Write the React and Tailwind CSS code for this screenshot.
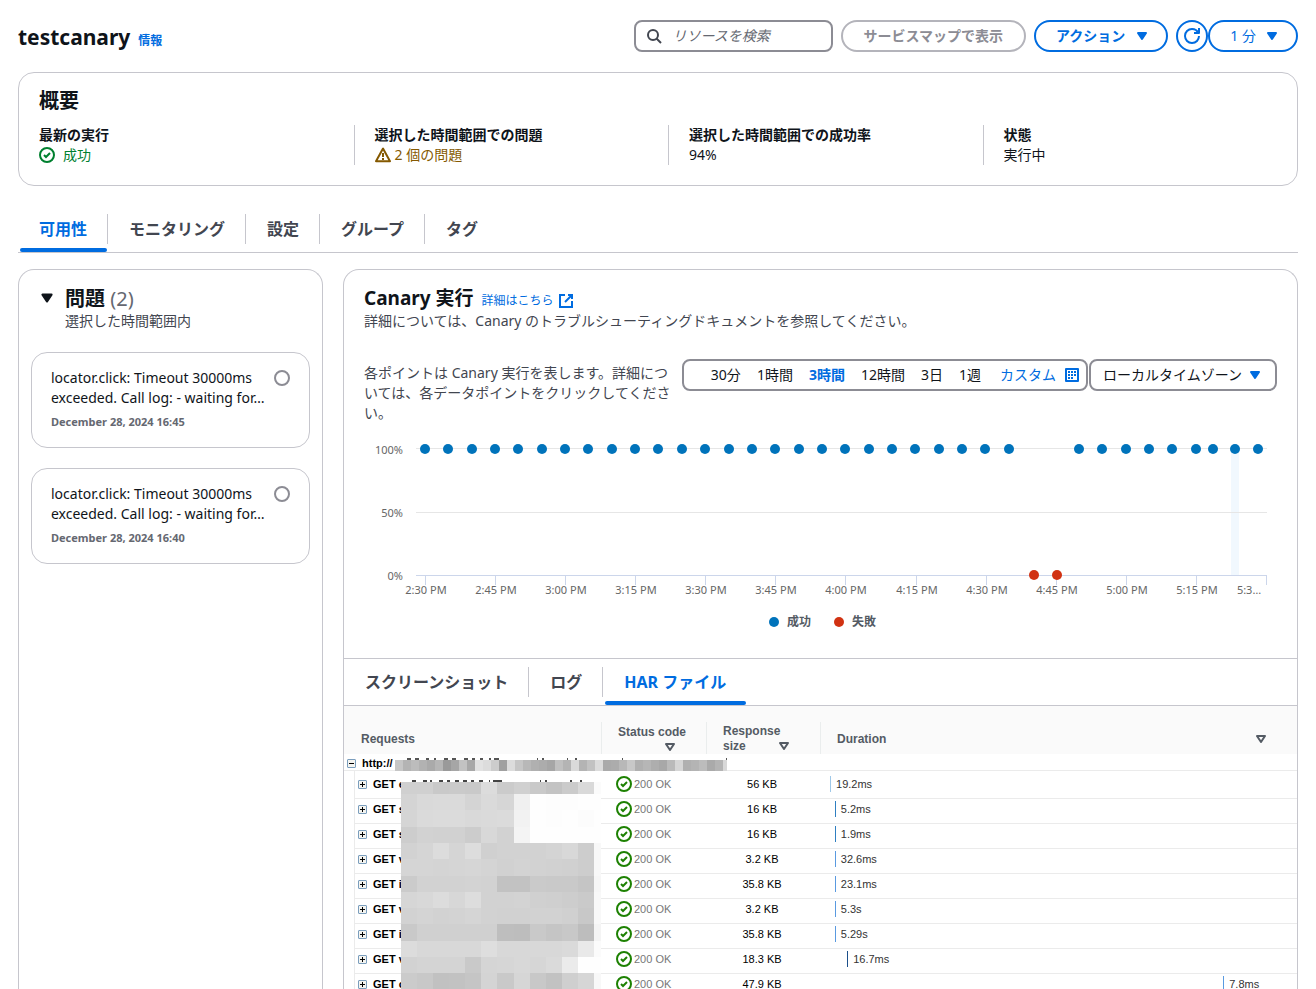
import React from "react";

const SUMMARY = [
  { label: "最新の実行", kind: "success", value: "成功" },
  { label: "選択した時間範囲での問題", kind: "warning", value: "2 個の問題" },
  { label: "選択した時間範囲での成功率", kind: "plain", value: "94%" },
  { label: "状態", kind: "plain", value: "実行中" },
];

const ISSUES = [
  { id: "issue-1", time: "December 28, 2024 16:45" },
  { id: "issue-2", time: "December 28, 2024 16:40" },
];

const RANGES = ["30分", "1時間", "3時間", "12時間", "3日", "1週"];

const SUCCESS_X = [
  61, 84, 108, 131, 154, 178, 201, 224, 248, 271, 294, 318, 341, 365, 388, 411, 435, 458, 481,
  505, 528, 551, 575, 598, 621, 645, 715, 738, 762, 785, 808, 832, 849, 871, 894,
];
const FAIL_X = [670, 693];

const TICKS = [
  [61, "2:30 PM"], [131, "2:45 PM"], [201, "3:00 PM"], [271, "3:15 PM"], [341, "3:30 PM"],
  [411, "3:45 PM"], [481, "4:00 PM"], [552, "4:15 PM"], [622, "4:30 PM"], [692, "4:45 PM"],
  [762, "5:00 PM"], [832, "5:15 PM"],
];

const REQUESTS = [
  { name: "GET e", size: "56 KB", offset: 1.9, time: "19.2ms", bar: "bg-[#9fc8e8]" },
  { name: "GET s", size: "16 KB", offset: 2.9, time: "5.2ms", bar: "bg-[#2f7fc1]" },
  { name: "GET s", size: "16 KB", offset: 2.9, time: "1.9ms", bar: "bg-[#2f7fc1]" },
  { name: "GET v", size: "3.2 KB", offset: 2.9, time: "32.6ms", bar: "bg-[#5a9ae0]" },
  { name: "GET i", size: "35.8 KB", offset: 2.9, time: "23.1ms", bar: "bg-[#5a9ae0]" },
  { name: "GET v", size: "3.2 KB", offset: 2.9, time: "5.3s", bar: "bg-[#5a9ae0]" },
  { name: "GET i", size: "35.8 KB", offset: 2.9, time: "5.29s", bar: "bg-[#5a9ae0]" },
  { name: "GET v", size: "18.3 KB", offset: 5.5, time: "16.7ms", bar: "bg-[#1b4f8a]" },
  { name: "GET c", size: "47.9 KB", offset: 84.5, time: "7.8ms", bar: "bg-[#5a9ae0]" },
];

// Grey levels of the pixelated mask, one hex byte per 16px cell.
const MASK = [
  "d0 d0 c9 ca c9 dc cb d0 c9 c3 cb d9 fb",
  "d4 d9 da da d4 da d6 f0 fe fd fd fe fe",
  "d5 da db db d9 da db f2 fe fd fe fc fe",
  "cd d2 d1 d1 cc d8 d2 f4 fe fe fe fe fe",
  "d2 d5 dc d5 dd d0 d2 d2 d2 d4 d8 cd f8",
  "d5 d5 d4 d5 d6 d4 d1 d3 d2 d1 d0 cd f8",
  "cb d2 d2 d2 d3 d2 c2 c2 ca c9 c9 c5 f6",
  "d6 d8 dc d7 dd d2 d2 d3 d0 cf cd ca f8",
  "d2 d4 d2 d3 d5 d2 d1 d1 d2 d2 d0 c8 f8",
  "c9 d0 d0 d0 d0 d0 be bd c9 c5 c8 bd f4",
  "dc d8 d8 d8 d8 de d8 d8 d8 d8 da e9 fb",
  "d2 d4 d4 d4 c9 d5 d6 d8 d6 da eb fe fe",
  "cb c8 c1 c2 c5 d4 c9 d6 c8 c2 cf d6 f8",
].map((row) => row.split(" "));

const HOST_MASK =
  "c6 b4 bc b2 aa b6 9a a6 c2 a8 e2 dc cc a0 dc c6 b8 b0 ac a6 c0 b4 da b4 c2 dc aa ac b8 c8 b0 b6 ae a8 ba d6 b0 b4 bc aa b4 d8".split(" ");

function CheckCircle({ className }) {
  return (
    <svg viewBox="0 0 16 16" className={className} fill="none" stroke="currentColor" strokeWidth="2" aria-hidden="true">
      <circle cx="8" cy="8" r="7" />
      <path d="M5 8 7 10 11 6" />
    </svg>
  );
}

function WarningIcon() {
  return (
    <svg viewBox="0 0 16 16" className="size-4 shrink-0" fill="none" stroke="currentColor" strokeWidth="2" strokeLinejoin="round" aria-hidden="true">
      <path d="M8 1.6 1 14.2h14z" />
      <path d="M8 6v4M8 11v2" />
    </svg>
  );
}

function Caret({ className = "size-4" }) {
  return (
    <svg viewBox="0 0 16 16" className={className} fill="currentColor" stroke="currentColor" strokeWidth="2" strokeLinejoin="round" aria-hidden="true">
      <path d="M4 5h8l-4 6z" />
    </svg>
  );
}

function SortIcon() {
  return (
    <svg viewBox="0 0 10 8" className="h-2 w-[10px] shrink-0" fill="none" stroke="currentColor" strokeWidth="2" strokeLinejoin="round" aria-hidden="true">
      <path d="M1 1h8L5 7z" />
    </svg>
  );
}

function TreeIcon({ open }) {
  return (
    <svg viewBox="0 0 9 9" className="size-[9px]" fill="none" aria-hidden="true">
      <rect x="0.5" y="0.5" width="8" height="8" rx="0.5" fill="#f4f4f0" stroke="#7b9ebd" />
      <path d={open ? "M2 4.5h5" : "M2 4.5h5M4.5 2v5"} stroke="#000" />
    </svg>
  );
}

function Tabs({ items, active, label }) {
  return (
    <div role="tablist" aria-label={label} className="flex h-[47px] items-center border-b border-[#c6c6cd]">
      {items.map((t, i) => (
        <div
          key={t}
          className={
            "relative flex h-full items-center " +
            (i < items.length - 1
              ? "after:absolute after:right-0 after:top-2 after:h-[30px] after:w-px after:bg-[#c6c6cd]"
              : "")
          }
        >
          <button
            type="button"
            role="tab"
            aria-selected={t === active}
            className={
              "h-full px-[21px] text-base font-bold whitespace-nowrap " +
              (t === active ? "text-[#006ce0]" : "text-[#424650]")
            }
          >
            {t}
          </button>
          {t === active && <span className="absolute right-px bottom-0 left-0.5 h-1 rounded-sm bg-[#006ce0]" />}
        </div>
      ))}
    </div>
  );
}

function IssueCard({ id, time }) {
  return (
    <label
      htmlFor={id}
      className="flex items-start justify-between rounded-2xl border border-[#c6c6cd] px-[19px] py-[15px]"
    >
      <span className="block">
        <span className="block text-sm leading-5 whitespace-nowrap text-[#0f141a]">
          locator.click: Timeout 30000ms
          <br />
          exceeded. Call log: - waiting for…
        </span>
        <span className="mt-1 block text-[11px] leading-5 font-bold text-[#656871]">{time}</span>
      </span>
      <input
        id={id}
        type="radio"
        name="issue"
        className="mt-0.5 size-4 shrink-0 appearance-none rounded-full border-2 border-[#8c8c94]"
      />
    </label>
  );
}

function RunChart() {
  return (
    <svg viewBox="0 0 913 200" className="mt-3 block h-auto w-full" role="img" aria-label="Canary 実行">
      <rect x="867" y="14" width="8" height="126" fill="#f1f8fe" />
      <path d="M52 13.5H903M52 77.5H903" stroke="#e6e6e6" />
      <path
        d={"M52 140.5H903M902.5 140v10" + TICKS.map(([x]) => `M${x + 0.5} 140v10`).join("")}
        stroke="#ccd6eb"
        fill="none"
      />
      <g fill="#666" fontSize="11" textAnchor="end">
        <text x="39" y="19">100%</text>
        <text x="39" y="82">50%</text>
        <text x="39" y="145">0%</text>
      </g>
      <g fill="#666" fontSize="11" textAnchor="middle">
        {TICKS.map(([x, t]) => (
          <text key={t} x={x + 1} y="159">{t}</text>
        ))}
        <text x="885" y="159">5:3…</text>
      </g>
      <g fill="#0073bb">
        {SUCCESS_X.map((x) => (
          <circle key={x} cx={x} cy="14" r="5" />
        ))}
        <circle cx="410" cy="187" r="5" />
      </g>
      <g fill="#d13212">
        {FAIL_X.map((x) => (
          <circle key={x} cx={x} cy="140" r="5" />
        ))}
        <circle cx="475" cy="187" r="5" />
      </g>
      <g fill="#545b64" fontSize="12" fontWeight="700">
        <text x="423" y="191">成功</text>
        <text x="488" y="191">失敗</text>
      </g>
    </svg>
  );
}

function Masks() {
  return (
    <>
      <svg viewBox="0 0 332 14" className="absolute left-[51px] top-[51px] h-[14px] w-[332px]" shapeRendering="crispEdges" aria-hidden="true">
        <path
          d="M12 2h4M20 2h4M31 2h3M39 2h2M49 2h4M57 2h4M69 2h4M77 2h3M85 2h3M94 2h2M99 2h5M142 2h1M147 2h2M172 2h1M180 2h2M227 2h1M331 2h1"
          stroke="#555"
          strokeWidth="2"
        />
        {HOST_MASK.map((g, i) => (
          <rect key={i} x={i * 8} y="3" width="8" height="11" fill={`#${g}${g}${g}`} />
        ))}
      </svg>
      <svg viewBox="0 0 200 211" className="absolute left-[57px] top-[73px] h-[211px] w-[200px]" shapeRendering="crispEdges" aria-hidden="true">
        <path
          d="M11 2h4M22 2h4M29 2h2M38 2h4M46 2h3M54 2h4M62 2h4M70 2h3M78 2h4M88 2h1M92 2h5M97 2h4M139 2h1M144 2h2M169 2h2M179 2h2"
          stroke="#444"
          strokeWidth="2"
        />
        {MASK.map((row, r) =>
          row.map((g, c) => (
            <rect
              key={`${r}-${c}`}
              x={c * 16 + (c > 6 ? 1 : 0)}
              y={r === 0 ? 3 : 15 + Math.round((r - 1) * 16.3)}
              width={c === 12 ? 7 : 17}
              height="17"
              fill={`#${g}${g}${g}`}
            />
          ))
        )}
      </svg>
    </>
  );
}

function HarTable() {
  const headText = "text-left text-xs leading-[15px] font-bold text-[#545b64]";
  return (
    <div className="relative font-['Liberation_Sans',Arial,sans-serif]">
      <table className="w-full table-fixed border-separate border-spacing-0">
        <colgroup>
          <col className="w-[258px]" />
          <col className="w-[105px]" />
          <col className="w-[114px]" />
          <col />
        </colgroup>
        <thead className="bg-[#fafafa]">
          <tr>
            <th scope="col" className="p-0 pt-4">
              <div className={`flex h-8 items-center border-r border-[#eaeded] pt-0.5 pl-[17px] ${headText}`}>Requests</div>
            </th>
            <th scope="col" className="p-0 pt-4">
              <div className={`h-8 border-r border-[#eaeded] pt-[3px] pl-4 ${headText}`}>
                <div>Status code</div>
                <div className="flex h-[14px] items-center pl-[47px]"><SortIcon /></div>
              </div>
            </th>
            <th scope="col" className="p-0 pt-4">
              <div className={`flex h-8 items-end border-r border-[#eaeded] pl-4 ${headText}`}>
                <div className="w-14">Response size</div>
                <div className="flex h-4 items-center"><SortIcon /></div>
              </div>
            </th>
            <th scope="col" className="p-0 pt-4">
              <div className={`flex h-8 items-center justify-between pt-0.5 pr-[31px] pl-4 ${headText}`}>
                <span>Duration</span>
                <SortIcon />
              </div>
            </th>
          </tr>
        </thead>
        <tbody className="text-[11px] leading-4">
          <tr>
            <td colSpan={4} className="h-[17px] border-b border-[#ebebeb] p-0">
              <div className="flex h-4 items-center gap-1.5 pt-0.5 pl-[3px]">
                <button type="button" aria-label="Collapse" className="flex"><TreeIcon open /></button>
                <span className="font-bold text-black">http://</span>
              </div>
            </td>
          </tr>
          {REQUESTS.map((r, i) => {
            const pad = i === 0 ? "pt-[5px]" : "pt-0.5";
            const h = i === 0 ? "h-7" : "h-[25px]";
            return (
              <tr key={i}>
                <td className="p-0 pl-[10px]">
                  <div className={`flex items-start gap-1.5 border-b border-l border-[#ebebeb] pl-[3px] ${h} ${pad}`}>
                    <button type="button" aria-label="Expand" className="flex h-4 items-center"><TreeIcon /></button>
                    <span className="font-bold text-black">{r.name}</span>
                  </div>
                </td>
                <td className="p-0">
                  <div className={`flex items-start gap-0.5 border-b border-[#ebebeb] pl-[14px] text-[#777] ${h} ${pad}`}>
                    <CheckCircle className="size-4 shrink-0 text-[#1d8102]" />
                    <span>200 OK</span>
                  </div>
                </td>
                <td className="p-0">
                  <div className={`border-b border-[#ebebeb] pr-1 text-center text-black ${h} ${pad}`}>{r.size}</div>
                </td>
                <td className="p-0">
                  <div className={`border-b border-[#ebebeb] text-[#333] ${h} ${pad}`}>
                    <div className="flex gap-[5px]" style={{ marginLeft: `${r.offset}%` }}>
                      <span className={`h-4 w-px ${r.bar}`} />
                      <span>{r.time}</span>
                    </div>
                  </div>
                </td>
              </tr>
            );
          })}
        </tbody>
      </table>
      <Masks />
    </div>
  );
}

export default function App() {
  const btn = "flex h-8 items-center rounded-full border-2 text-sm whitespace-nowrap";
  return (
    <main
      lang="ja"
      className="flex h-screen flex-col overflow-y-auto bg-white px-[18px] pt-5 font-['Noto_Sans','Noto_Sans_CJK_JP',sans-serif] text-sm leading-5 text-[#0f141a] [scrollbar-width:none]"
    >
      <header className="flex h-8 shrink-0 items-center justify-between">
        <div className="flex items-baseline gap-2 pt-0.5">
          <h1 className="text-[21px] leading-8 font-bold">testcanary</h1>
          <a href="#info" className="text-xs font-bold text-[#006ce0]">情報</a>
        </div>
        <div className="flex items-center gap-2">
          <div className="flex h-8 w-[199px] items-center gap-[10px] rounded-lg border-2 border-[#8c8c94] px-[10px]">
            <svg viewBox="0 0 16 16" className="size-4 shrink-0 text-[#424650]" fill="none" stroke="currentColor" strokeWidth="2" aria-hidden="true">
              <circle cx="7" cy="7" r="5" />
              <path d="m15 15-4.5-4.5" />
            </svg>
            <input
              type="search"
              aria-label="リソースを検索"
              placeholder="リソースを検索"
              className="w-full min-w-0 bg-transparent text-sm outline-none placeholder:italic placeholder:text-[#656871]"
            />
          </div>
          <button type="button" disabled className={`${btn} border-[#b4b4bb] pr-[21px] pl-5 font-bold text-[#8c8c94]`}>
            サービスマップで表示
          </button>
          <button type="button" className={`${btn} gap-[9px] border-[#006ce0] pr-4 pl-5 font-bold text-[#006ce0]`}>
            アクション
            <Caret />
          </button>
          <div className="flex">
            <button type="button" aria-label="更新" className={`${btn} w-8 justify-center border-[#006ce0] text-[#006ce0]`}>
              <svg viewBox="0 0 16 16" className="size-4 shrink-0" fill="none" stroke="currentColor" strokeWidth="2" strokeLinejoin="round" aria-hidden="true">
                <path d="M10 5h5V0" />
                <path d="M15 8a6.957 6.957 0 0 1-7 7 6.957 6.957 0 0 1-7-7 6.957 6.957 0 0 1 7-7 6.87 6.87 0 0 1 6.3 4" />
              </svg>
            </button>
            <button type="button" className={`${btn} gap-2 border-[#006ce0] pr-4 pl-5 text-[#006ce0]`}>
              1 分
              <Caret />
            </button>
          </div>
        </div>
      </header>

      <section className="mt-5 shrink-0 overflow-hidden rounded-2xl border border-[#c6c6cd] pt-4 pb-5 pl-5">
        <h2 className="text-[20px] leading-6 font-bold">概要</h2>
        <dl className="mt-3 grid grid-cols-4">
          {SUMMARY.map((s, i) => (
            <div key={s.label} className={i ? "border-l border-[#c6c6cd] pl-5" : ""}>
              <dt className="leading-5 font-bold">{s.label}</dt>
              {s.kind === "success" && (
                <dd className="flex items-center gap-2 leading-5 text-[#00802f]">
                  <CheckCircle className="size-4 shrink-0" />
                  {s.value}
                </dd>
              )}
              {s.kind === "warning" && (
                <dd className="flex items-center gap-1 leading-5 text-[#855900]">
                  <WarningIcon />
                  {s.value}
                </dd>
              )}
              {s.kind === "plain" && <dd className="leading-5">{s.value}</dd>}
            </div>
          ))}
        </dl>
      </section>

      <nav className="mt-5 shrink-0">
        <Tabs label="Canary" active="可用性" items={["可用性", "モニタリング", "設定", "グループ", "タグ"]} />
      </nav>

      <div className="mt-4 flex shrink-0 grow gap-5">
        <aside className="w-[305px] shrink-0 rounded-t-2xl border border-b-0 border-[#c6c6cd] px-3 pt-4">
          <div className="flex items-start gap-[9px] pl-[7px]">
            <button type="button" aria-label="問題" className="flex h-6 items-center">
              <Caret className="size-[18px]" />
            </button>
            <div>
              <h2 className="text-[20px] leading-[25px] font-bold">
                問題 <span className="font-normal text-[#656871]">(2)</span>
              </h2>
              <p className="text-[#424650]">選択した時間範囲内</p>
            </div>
          </div>
          <div className="mt-[21px] flex flex-col gap-5">
            {ISSUES.map((it) => (
              <IssueCard key={it.id} {...it} />
            ))}
          </div>
        </aside>

        <section className="min-w-0 flex-1 rounded-t-2xl border border-b-0 border-[#c6c6cd]">
          <div className="border-b border-[#c6c6cd] px-5 pt-4 pb-[23px]">
            <div className="flex items-baseline gap-2">
              <h2 className="text-[19px] leading-[25px] font-bold">Canary 実行</h2>
              <a href="#learn-more" className="flex items-center gap-1 text-xs text-[#006ce0]">
                詳細はこちら
                <svg viewBox="0 0 16 16" className="size-4" fill="none" stroke="currentColor" strokeWidth="2" aria-hidden="true">
                  <path d="M10 2h4v4" />
                  <path d="m7 9 7-7" />
                  <path d="M14 8v6H2V2h5" />
                </svg>
              </a>
            </div>
            <p className="text-[#424650]">
              詳細については、Canary のトラブルシューティングドキュメントを参照してください。
            </p>
            <div className="mt-7 flex items-start gap-2">
              <p className="min-w-0 flex-1 pt-1 text-[#424650]">
                各ポイントは Canary 実行を表します。詳細については、各データポイントをクリックしてください。
              </p>
              <div className="flex shrink-0 gap-px">
                <div className="flex h-8 items-center gap-4 rounded-lg border-2 border-[#8c8c94] pr-[6px] pl-[27px]">
                  {RANGES.map((r) => (
                    <button
                      key={r}
                      type="button"
                      className={"whitespace-nowrap " + (r === "3時間" ? "font-bold text-[#006ce0]" : "")}
                    >
                      {r}
                    </button>
                  ))}
                  <button type="button" className="flex items-center gap-2 pl-[3px] whitespace-nowrap text-[#006ce0]">
                    カスタム
                    <svg viewBox="0 0 16 16" className="size-4" fill="none" stroke="currentColor" aria-hidden="true">
                      <path d="M2 2h12v12H2z" strokeWidth="2" strokeLinejoin="round" />
                      <path d="M4 4h2v2H4zM7 4h2v2H7zM10 4h2v2h-2zM4 7h2v2H4zM7 7h2v2H7zM10 7h2v2h-2zM4 10h2v2H4zM7 10h2v2H7z" fill="currentColor" stroke="none" />
                    </svg>
                  </button>
                </div>
                <button type="button" className="flex h-8 items-center gap-[5px] rounded-lg border-2 border-[#8c8c94] px-3 whitespace-nowrap">
                  ローカルタイムゾーン
                  <Caret className="size-4 text-[#006ce0]" />
                </button>
              </div>
            </div>
            <RunChart />
          </div>
          <Tabs label="詳細" active="HAR ファイル" items={["スクリーンショット", "ログ", "HAR ファイル"]} />
          <HarTable />
        </section>
      </div>
    </main>
  );
}
